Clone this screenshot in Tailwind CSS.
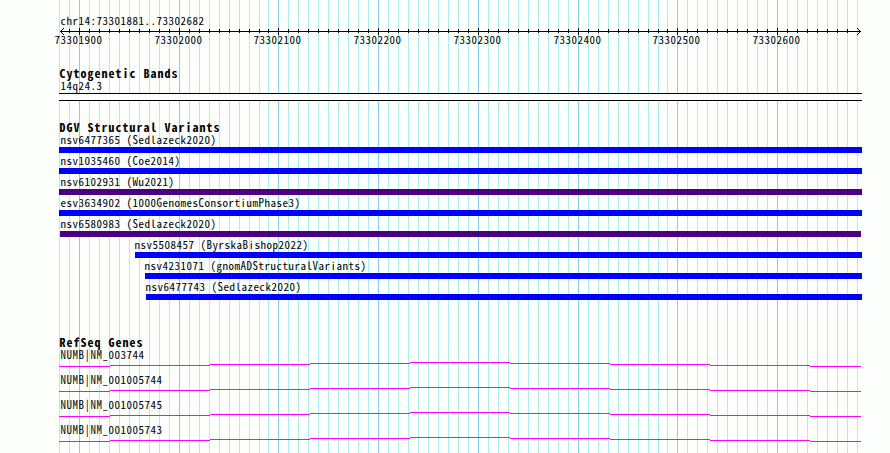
<!DOCTYPE html>
<html lang="en">
<head>
  <meta charset="UTF-8" />
  <meta name="viewport" content="width=device-width, initial-scale=1.0" />
  <title>chr14:73301881..73302682</title>
  <script src="https://cdn.jsdelivr.net/npm/@tailwindcss/browser@4"></script>
</head>
<body class="bg-[#fdfffc] overflow-hidden">
  <main class="relative w-[890px] h-[453px] overflow-hidden text-black font-['Noto_Sans_CJK_JP','Liberation_Mono',monospace] [font-feature-settings:'hwid'] text-[11px] leading-[12px] tracking-[0.5px] whitespace-nowrap">
    <!-- grid lines behind every track -->
    <svg id="grid" class="absolute inset-0 -z-10" width="890" height="453" shape-rendering="crispEdges"></svg>

    <header class="pt-[14px]">
      <div class="ml-[60.5px] h-3">chr14:73301881..73302682</div>
      <svg id="ruler" class="block" width="890" height="22" fill="#000"></svg>
    </header>

    <section class="mt-[19px]">
      <h2 class="ml-[59.5px] h-3 text-[12px] font-bold tracking-[1px]">Cytogenetic Bands</h2>
      <div class="ml-[60.5px] h-3">14q24.3</div>
      <div class="mt-0.5 ml-[59px] w-[803px] h-2 border-y border-black bg-[#fdfffc]"></div>
    </section>

    <section class="mt-5">
      <h2 class="ml-[59.5px] h-3 text-[12px] font-bold tracking-[1px]">DGV Structural Variants</h2>
      <div class="ml-[59px] mr-7 h-[21px]">
        <div class="ml-[1.5px] h-3">nsv6477365 (Sedlazeck2020)</div>
        <div class="mt-0.5 h-1.5 bg-[#0000ff]"></div>
      </div>
      <div class="ml-[59px] mr-7 h-[21px]">
        <div class="ml-[1.5px] h-3">nsv1035460 (Coe2014)</div>
        <div class="mt-0.5 h-1.5 bg-[#0000ff]"></div>
      </div>
      <div class="ml-[59px] mr-7 h-[21px]">
        <div class="ml-[1.5px] h-3">nsv6102931 (Wu2021)</div>
        <div class="mt-0.5 h-1.5 bg-[#4b0082]"></div>
      </div>
      <div class="ml-[59px] mr-7 h-[21px]">
        <div class="ml-[1.5px] h-3">esv3634902 (1000GenomesConsortiumPhase3)</div>
        <div class="mt-0.5 h-1.5 bg-[#0000ff]"></div>
      </div>
      <div class="ml-[60px] mr-[29px] h-[21px]">
        <div class="ml-[0.5px] h-3">nsv6580983 (Sedlazeck2020)</div>
        <div class="mt-0.5 h-1.5 bg-[#4b0082]"></div>
      </div>
      <div class="ml-[135px] mr-7 h-[21px]">
        <div class="-ml-[0.5px] h-3">nsv5508457 (ByrskaBishop2022)</div>
        <div class="mt-0.5 h-1.5 bg-[#0000ff]"></div>
      </div>
      <div class="ml-[145px] mr-7 h-[21px]">
        <div class="-ml-[0.5px] h-3">nsv4231071 (gnomADStructuralVariants)</div>
        <div class="mt-0.5 h-1.5 bg-[#0000ff]"></div>
      </div>
      <div class="ml-[146px] mr-7 h-[21px]">
        <div class="-ml-[0.5px] h-3">nsv6477743 (Sedlazeck2020)</div>
        <div class="mt-0.5 h-1.5 bg-[#0000ff]"></div>
      </div>
    </section>

    <section class="mt-[35px]">
      <h2 class="ml-[59.5px] h-3 text-[12px] font-bold tracking-[1px]">RefSeq Genes</h2>
      <div class="h-[25px]">
        <div class="ml-[60.5px] h-3">NUMB|NM_003744</div>
        <svg class="gene block" width="890" height="13" fill="#ff00ff"></svg>
      </div>
      <div class="h-[25px]">
        <div class="ml-[60.5px] h-3">NUMB|NM_001005744</div>
        <svg class="gene block" width="890" height="13" fill="#ff00ff"></svg>
      </div>
      <div class="h-[25px]">
        <div class="ml-[60.5px] h-3">NUMB|NM_001005745</div>
        <svg class="gene block" width="890" height="13" fill="#ff00ff"></svg>
      </div>
      <div class="h-[25px]">
        <div class="ml-[60.5px] h-3">NUMB|NM_001005743</div>
        <svg class="gene block" width="890" height="13" fill="#ff00ff"></svg>
      </div>
    </section>
  </main>

  <script>
    const rect = (x, y, w, h, fill) =>
      `<rect x="${x}" y="${y}" width="${w}" height="${h}"${fill ? ` fill="${fill}"` : ''}/>`;

    // one line per 10 bp, the scale is slightly under 1px per base
    const lineX = i => 59 + 10 * i - (i > 20 ? 1 : 0) - (i > 60 ? 1 : 0);
    const isMajor = i => i % 10 === 2;

    let grid = '';
    let ruler = rect(60, 5, 801, 1);
    for (let i = 0; i <= 80; i++) {
      const x = lineX(i);
      grid += rect(x, 0, 1, 453, isMajor(i) ? '#87ceeb' : '#afeeee');
      if (i > 0 && i < 80) ruler += isMajor(i) ? rect(x, 2, 1, 7) : rect(x, 3, 1, 4);
      if (isMajor(i)) ruler += `<text x="${x - 24.5}" y="18">${73301880 + i * 10}</text>`;
    }

    // arrow heads
    for (let d = 1; d <= 3; d++) {
      ruler += rect(60 + d, 5 - d, 1, 1) + rect(60 + d, 5 + d, 1, 1);
      ruler += rect(860 - d, 5 - d, 1, 1) + rect(860 - d, 5 + d, 1, 1);
    }
    document.getElementById('grid').innerHTML = grid;
    document.getElementById('ruler').innerHTML = ruler;

    // introns: [start, end, y]
    const steps = [
      [59, 110, 6], [110, 210, 5], [210, 310, 4], [310, 410, 3], [410, 510, 2],
      [510, 610, 3], [610, 710, 4], [710, 810, 5], [810, 861, 6],
    ];
    document.querySelectorAll('.gene').forEach(el => {
      el.innerHTML = steps.map(([a, b, y]) => rect(a, y, b - a, 1)).join('');
    });
  </script>
</body>
</html>
